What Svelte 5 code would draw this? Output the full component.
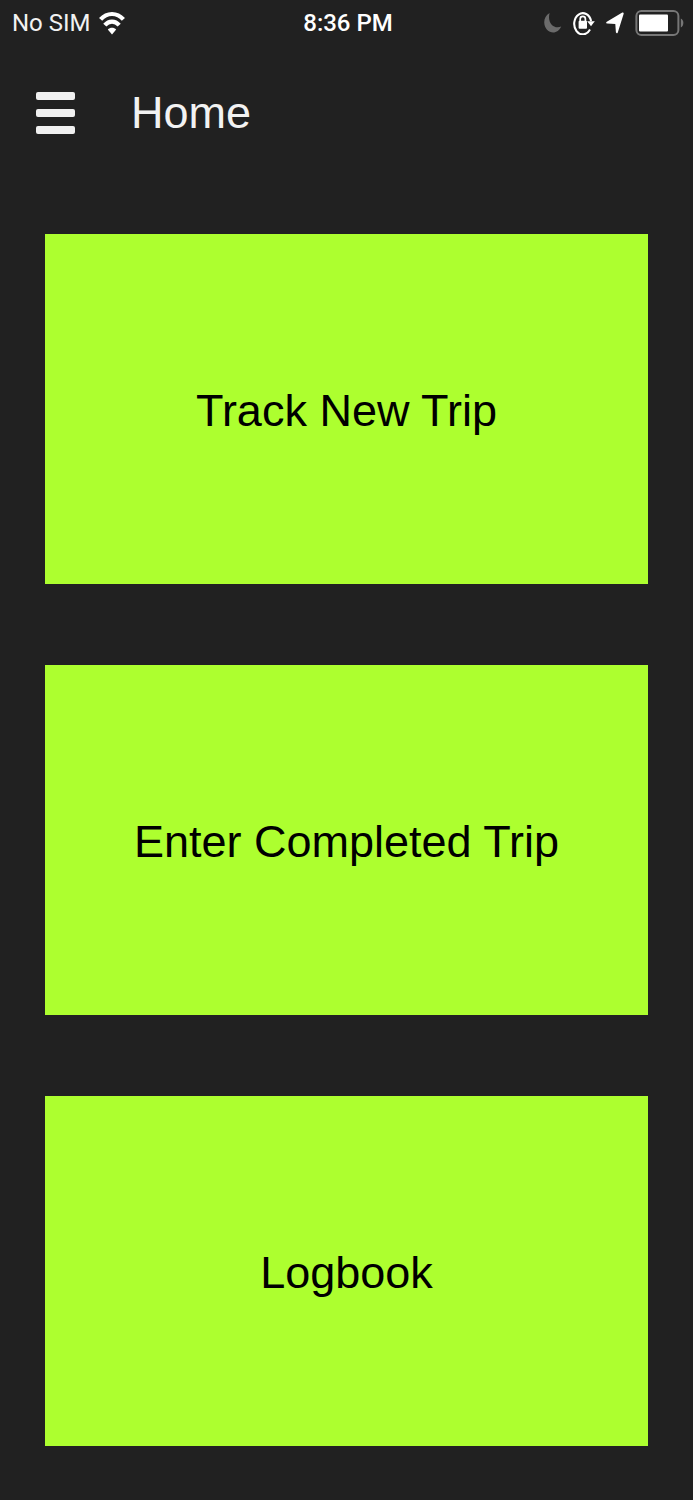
<script>
  const carrier = "No SIM";
  const time = "8:36 PM";
  const title = "Home";

  const actions = [
    { id: "track", label: "Track New Trip" },
    { id: "enter", label: "Enter Completed Trip" },
    { id: "logbook", label: "Logbook" },
  ];
</script>

<div class="screen">
  <div class="status-bar">
    <div class="carrier">
      <span>{carrier}</span>
      <svg width="26" height="24" viewBox="0 0 26 24" aria-hidden="true">
        <g fill="none" stroke="#fff" stroke-width="4.2">
          <path d="M1.6 8.4 C8 1.2 18 1.2 24.4 8.4" />
          <path d="M5.8 14.2 C10 9.4 16 9.4 20.2 14.2" />
        </g>
        <path d="M13 23.4 L8.8 18.6 C11 16 15 16 17.2 18.6 Z" fill="#fff" />
      </svg>
    </div>
    <span class="time">{time}</span>
    <div class="indicators">
      <svg width="18" height="22" viewBox="0 0 18 22" aria-hidden="true">
        <path d="M5.6 1 C-0.6 4 -1.4 13 3 17.8 C7.6 22.6 14.6 21 17.2 14.6 C9.4 17.4 3 10.4 5.6 1 Z" fill="#6b6b6b" />
      </svg>
      <svg width="22" height="24" viewBox="0 0 22 24" aria-hidden="true">
        <path d="M17 18.6 A8.6 10.6 0 1 1 18.1 10" fill="none" stroke="#fff" stroke-width="2.1" />
        <path d="M14.2 10.2 H21.8 L18 15.2 Z" fill="#fff" />
        <rect x="5.6" y="9.8" width="8.4" height="8" rx="1" fill="#fff" />
        <path d="M7.2 11 V8 C7.2 4.6 12.4 4.6 12.4 8 V11" fill="none" stroke="#fff" stroke-width="1.7" />
      </svg>
      <svg width="18" height="22" viewBox="0 0 18 22" aria-hidden="true">
        <path d="M16.3 0.5 Q18 0 17.6 2 L11.8 20.4 Q10.8 22.4 9.9 20.2 L9.3 12 L1 11.6 Q-0.6 11 0.8 9.8 Z" fill="#fff" />
      </svg>
      <svg width="49" height="26" viewBox="0 0 49 26" aria-hidden="true">
        <rect x="1.4" y="1" width="42" height="24" rx="5" fill="none" stroke="#777" stroke-width="2" />
        <rect x="4" y="4.4" width="29" height="17.2" rx="1" fill="#fff" />
        <path d="M45.8 8.6 C49.2 10 49.2 16 45.8 17.4 Z" fill="#777" />
      </svg>
    </div>
  </div>

  <header class="header">
    <button class="menu" aria-label="Menu">
      <span></span>
      <span></span>
      <span></span>
    </button>
    <h1>{title}</h1>
  </header>

  <main class="actions">
    {#each actions as action (action.id)}
      <button class="action">{action.label}</button>
    {/each}
  </main>
</div>

<style>
  :global(body) {
    margin: 0;
    background: #212121;
  }

  .screen {
    box-sizing: border-box;
    min-height: 100vh;
    padding-bottom: 54px;
    background: #212121;
    color: #f2f2f2;
    font-family: "Liberation Sans", Arial, sans-serif;
  }

  .status-bar {
    display: grid;
    grid-template-columns: 1fr auto 1fr;
    align-items: center;
    height: 46px;
    padding: 0 9px 0 12px;
    font-family: Roboto, sans-serif;
    font-size: 24px;
  }

  .carrier,
  .indicators {
    display: flex;
    align-items: center;
  }

  .carrier {
    gap: 8px;
  }

  .indicators {
    justify-content: flex-end;
    gap: 11px;
  }

  .time {
    color: #fff;
    font-weight: 500;
  }

  .header {
    display: flex;
    align-items: center;
    gap: 56px;
    height: 134px;
    padding: 0 36px;
  }

  .menu {
    display: flex;
    flex-direction: column;
    gap: 9px;
    width: 39px;
    padding: 0;
    border: 0;
    background: none;
  }

  .menu span {
    height: 8px;
    border-radius: 2px;
    background: #f0f0f0;
  }

  h1 {
    margin: 0;
    font-size: 45px;
    font-weight: 400;
    line-height: 60px;
  }

  .actions {
    display: flex;
    flex-direction: column;
    gap: 81px;
    padding: 54px 45px 0;
  }

  .action {
    height: 350px;
    padding: 4px 0 0;
    border: 0;
    background: #adff2f;
    color: #000;
    font-family: inherit;
    font-size: 45px;
  }
</style>
